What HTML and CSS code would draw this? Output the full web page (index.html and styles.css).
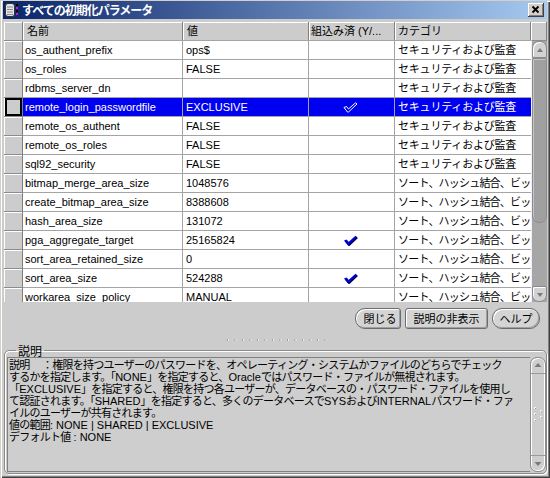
FILE: index.html
```html
<!DOCTYPE html>
<html lang="ja">
<head>
<meta charset="utf-8">
<title>すべての初期化パラメータ</title>
<link rel="stylesheet" href="styles.css">
</head>
<body>
<div class="window">
  <div class="titlebar">
    <svg class="app-icon" viewBox="0 0 16 16" width="16" height="16">
      <rect x="1.5" y="1.5" width="9" height="13" rx="2.5" fill="#e4e4e4" stroke="#303030"/>
      <path d="M3 5h6M3 7.5h6M3 10h6M3 12.5h6" stroke="#8a8a8a" stroke-width="1"/>
      <rect x="12" y="2" width="2" height="2" fill="#000"/>
      <rect x="12" y="5" width="2" height="2" fill="#c020c0"/>
      <rect x="12" y="8" width="2" height="2" fill="#000"/>
      <rect x="12" y="11" width="2" height="2" fill="#c020c0"/>
    </svg>
    <span class="title">すべての初期化パラメータ</span>
    <div class="close">
      <svg viewBox="0 0 16 14" width="16" height="14"><path d="M4.5 3.5l6 6M10.5 3.5l-6 6" stroke="#000" stroke-width="1.8"/></svg>
    </div>
  </div>

  <div class="content">
    <div class="table">
      <div class="grid">
        <div class="row head">
          <div class="cell rh"></div>
          <div class="cell hc">名前</div>
          <div class="cell hc">値</div>
          <div class="cell hc">組込み済 (Y/...</div>
          <div class="cell hc">カテゴリ</div>
        </div>
        <div class="row"><div class="cell rh"></div><div class="cell">os_authent_prefix</div><div class="cell">ops$</div><div class="cell chk"></div><div class="cell cat">セキュリティおよび監査</div></div>
        <div class="row"><div class="cell rh"></div><div class="cell">os_roles</div><div class="cell">FALSE</div><div class="cell chk"></div><div class="cell cat">セキュリティおよび監査</div></div>
        <div class="row"><div class="cell rh"></div><div class="cell">rdbms_server_dn</div><div class="cell"></div><div class="cell chk"></div><div class="cell cat">セキュリティおよび監査</div></div>
        <div class="row sel"><div class="cell rh"><div class="sel-mark"></div></div><div class="cell">remote_login_passwordfile</div><div class="cell">EXCLUSIVE</div><div class="cell chk"><svg viewBox="0 0 15 11" width="15" height="11"><polygon points="1,5.5 3.5,4.5 5.5,7 12.5,0.8 14,2 5.5,10 4.5,10" fill="none" stroke="#fff" stroke-width="1"/></svg></div><div class="cell cat">セキュリティおよび監査</div></div>
        <div class="row"><div class="cell rh"></div><div class="cell">remote_os_authent</div><div class="cell">FALSE</div><div class="cell chk"></div><div class="cell cat">セキュリティおよび監査</div></div>
        <div class="row"><div class="cell rh"></div><div class="cell">remote_os_roles</div><div class="cell">FALSE</div><div class="cell chk"></div><div class="cell cat">セキュリティおよび監査</div></div>
        <div class="row"><div class="cell rh"></div><div class="cell">sql92_security</div><div class="cell">FALSE</div><div class="cell chk"></div><div class="cell cat">セキュリティおよび監査</div></div>
        <div class="row"><div class="cell rh"></div><div class="cell">bitmap_merge_area_size</div><div class="cell">1048576</div><div class="cell chk"></div><div class="cell cat sort">ソート、ハッシュ結合、ビッ</div></div>
        <div class="row"><div class="cell rh"></div><div class="cell">create_bitmap_area_size</div><div class="cell">8388608</div><div class="cell chk"></div><div class="cell cat sort">ソート、ハッシュ結合、ビッ</div></div>
        <div class="row"><div class="cell rh"></div><div class="cell">hash_area_size</div><div class="cell">131072</div><div class="cell chk"></div><div class="cell cat sort">ソート、ハッシュ結合、ビッ</div></div>
        <div class="row"><div class="cell rh"></div><div class="cell">pga_aggregate_target</div><div class="cell">25165824</div><div class="cell chk"><svg viewBox="0 0 15 11" width="15" height="11"><polygon points="2,6.5 4.5,5.5 6.5,8 13.5,1.8 15,3 6.5,11 5.5,11" fill="#000050"/><polygon points="1,5.5 3.5,4.5 5.5,7 12.5,0.8 14,2 5.5,10 4.5,10" fill="#0000d8"/></svg></div><div class="cell cat sort">ソート、ハッシュ結合、ビッ</div></div>
        <div class="row"><div class="cell rh"></div><div class="cell">sort_area_retained_size</div><div class="cell">0</div><div class="cell chk"></div><div class="cell cat sort">ソート、ハッシュ結合、ビッ</div></div>
        <div class="row"><div class="cell rh"></div><div class="cell">sort_area_size</div><div class="cell">524288</div><div class="cell chk"><svg viewBox="0 0 15 11" width="15" height="11"><polygon points="2,6.5 4.5,5.5 6.5,8 13.5,1.8 15,3 6.5,11 5.5,11" fill="#000050"/><polygon points="1,5.5 3.5,4.5 5.5,7 12.5,0.8 14,2 5.5,10 4.5,10" fill="#0000d8"/></svg></div><div class="cell cat sort">ソート、ハッシュ結合、ビッ</div></div>
        <div class="row"><div class="cell rh"></div><div class="cell">workarea_size_policy</div><div class="cell">MANUAL</div><div class="cell chk"></div><div class="cell cat sort">ソート、ハッシュ結合、ビッ</div></div>
      </div>
      <div class="vscroll">
        <div class="vs-head"></div>
        <div class="vs-body">
          <div class="vs-up"><svg viewBox="0 0 14 16" width="14" height="16"><path d="M4 10h6l-3-4z" fill="#7a7a7a"/></svg></div>
          <div class="vs-thumb"></div>
          <div class="vs-track"></div>
          <div class="vs-down"><svg viewBox="0 0 14 15" width="14" height="15"><path d="M4 6h6l-3 4z" fill="#7a7a7a"/></svg></div>
        </div>
      </div>
    </div>

    <div class="buttons">
      <div class="btn b-close">閉じる</div>
      <div class="btn b-hide">説明の非表示</div>
      <div class="btn b-help">ヘルプ</div>
    </div>

    <div class="splitter"><div class="dots"></div></div>

    <fieldset class="desc">
      <legend>説明</legend>
      <div class="desc-box">
        <div class="desc-text">説明 　：権限を持つユーザーのパスワードを、オペレーティング・システムかファイルのどちらでチェック<br>するかを指定します。「<span class="en">NONE</span>」を指定すると、<span class="en">Oracle</span>ではパスワード・ファイルが無視されます。<br>「<span class="en">EXCLUSIVE</span>」を指定すると、権限を持つ各ユーザーが、データベースの・パスワード・ファイルを使用し<br>て認証されます。「<span class="en">SHARED</span>」を指定すると、多くのデータベースで<span class="en">SYS</span>および<span class="en">INTERNAL</span>パスワード・ファ<br>イルのユーザーが共有されます。<br>値の範囲<span class="en">: NONE | SHARED | EXCLUSIVE</span><br>デフォルト値<span class="en"> : NONE</span></div>
        <div class="dscroll">
          <div class="ds-up"><svg viewBox="0 0 14 14" width="14" height="14"><path d="M3.5 9h7l-3.5-4z" fill="#7a7a7a"/></svg></div>
          <div class="ds-grip"><svg viewBox="0 0 14 18" width="14" height="18"><g fill="#f4f4f4"><rect x="3" y="1" width="2" height="2"/><rect x="9" y="4" width="2" height="2"/><rect x="3" y="7" width="2" height="2"/><rect x="9" y="10" width="2" height="2"/><rect x="3" y="13" width="2" height="2"/></g><g fill="#9a9a9a"><rect x="4" y="2" width="1" height="1"/><rect x="10" y="5" width="1" height="1"/><rect x="4" y="8" width="1" height="1"/><rect x="10" y="11" width="1" height="1"/><rect x="4" y="14" width="1" height="1"/></g></svg></div>
          <div class="ds-down"><svg viewBox="0 0 14 14" width="14" height="14"><path d="M3.5 5h7l-3.5 4z" fill="#7a7a7a"/></svg></div>
        </div>
      </div>
    </fieldset>
  </div>
</div>
</body>
</html>
```
FILE: styles.css
```css
* { box-sizing: border-box; }
html, body { margin: 0; padding: 0; }
body {
  width: 550px;
  height: 478px;
  overflow: hidden;
  background: #d4d0c8;
  font-family: "Liberation Sans", "Noto Sans CJK JP", sans-serif;
  font-size: 11px;
  color: #000;
}
.window {
  width: 550px;
  height: 478px;
  display: flex;
  flex-direction: column;
  padding: 1px 3px 4px 3px;
  background: #cccccc;
  box-shadow: inset 1px 1px #d4d0c8, inset 2px 2px #ffffff, inset -1px -1px #404040, inset -2px -2px #808080;
}

/* title bar */
.titlebar {
  flex: none;
  height: 18px;
  display: flex;
  align-items: center;
  padding: 0 3px 0 1px;
  background: linear-gradient(to right, #0a246a, #a6caf0);
  color: #fff;
}
.app-icon { flex: none; display: block; }
.title {
  margin-left: 2px;
  font-family: "Noto Sans CJK JP", sans-serif;
  font-weight: bold;
  font-size: 12px;
  letter-spacing: -1px;
  line-height: 18px;
}
.close {
  margin-left: auto;
  width: 16px;
  height: 14px;
  background: #d4d0c8;
  box-shadow: inset -1px -1px #404040, inset 1px 1px #ffffff, inset -2px -2px #808080;
}
.close svg { display: block; }

/* content */
.content {
  flex: 1;
  display: flex;
  flex-direction: column;
  padding: 3px 0 0 1px;
  min-height: 0;
}

/* table */
.table {
  flex: none;
  height: 280px;
  display: flex;
  overflow: hidden;
}
.grid {
  width: 527px;
  flex: none;
  display: flex;
  flex-direction: column;
}
.row {
  flex: none;
  display: grid;
  grid-template-columns: 19px 160px 126px 86px 136px;
  height: 19px;
}
.cell {
  border-top: 1px solid #a4a4a4;
  border-right: 1px solid #a4a4a4;
  background: #ffffff;
  padding-left: 2px;
  line-height: 18px;
  white-space: nowrap;
  overflow: hidden;
}
.cell:nth-child(3), .cell.cat { padding-left: 3px; }
.cat { letter-spacing: -0.2px; border-right: none; }
.cat.sort { letter-spacing: -0.8px; }
.row.head { height: 18px; }
.row.head .cell {
  border-top: none;
  border-right: 1px solid #808080;
  background: #cccccc;
  box-shadow: inset 1px 1px #ffffff;
  line-height: 18px;
  padding-left: 4px;
}
.row.head .cell:nth-child(4) { padding-left: 2px; }
.row.head .cell:nth-child(5) { padding-left: 3px; border-right: 1px solid #808080; }
.cell.rh {
  background: #cccccc;
  border-top: 1px solid #8c8c8c;
  border-right: 1px solid #808080;
  box-shadow: inset 1px 1px #ffffff;
  padding: 0;
}
.sel-mark {
  height: 100%;
  margin-left: 1px;
  border: 2px solid #000;
  background: #cccccc;
}
.row.sel .cell:not(.rh) {
  background: #0000f0;
  color: #ffffff;
}
.chk {
  display: flex;
  align-items: center;
  justify-content: center;
  padding-left: 0;
}
.chk svg { display: block; margin-left: -2px; }

/* table scrollbar */
.vscroll {
  width: 16px;
  flex: none;
  display: flex;
  flex-direction: column;
}
.vs-head {
  flex: none;
  height: 18px;
  background: #cccccc;
  box-shadow: inset 1px 1px #ffffff;
  border-right: 1px solid #808080;
}
.vs-body {
  flex: 1;
  display: flex;
  flex-direction: column;
  background: #a6a6a6;
  border-top: 1px solid #8c8c8c;
  border-left: 1px solid #f0f0f0;
}
.vs-up {
  flex: none;
  height: 17px;
  background: #d2d2d2;
  border: 1px solid #8a8a8a;
  border-radius: 7px 7px 2px 2px;
  box-shadow: inset 1px 1px #ffffff;
}
.vs-up svg, .vs-down svg { display: block; }
.vs-thumb {
  flex: none;
  height: 165px;
  background: #a0a0a0;
  border: 1px solid #8c8c8c;
  border-radius: 2px 2px 7px 7px;
  box-shadow: inset 1px 1px #c4c4c4;
}
.vs-track { flex: 1; background: #a6a6a6; }
.vs-down {
  flex: none;
  height: 16px;
  background: #d2d2d2;
  border: 1px solid #8a8a8a;
  border-radius: 2px 2px 7px 7px;
  box-shadow: inset 1px 1px #ffffff;
}

/* buttons */
.buttons {
  flex: none;
  height: 34px;
  display: flex;
  justify-content: flex-end;
  align-items: flex-start;
  gap: 4px;
  padding: 6px 7px 0 0;
}
.btn {
  height: 21px;
  display: flex;
  align-items: center;
  justify-content: center;
  font-family: "Noto Sans CJK JP", sans-serif;
  font-size: 11px;
  line-height: 19px;
  background: #d4d4d4;
  border: 1px solid #6c6c6c;
  box-shadow: inset 1px 1px #ffffff, inset -1px -1px #a0a0a0;
}
.b-close { width: 46px; border-radius: 10px 3px 3px 10px; padding-left: 4px; }
.b-hide { width: 83px; border-radius: 3px; }
.b-help { width: 48px; border-radius: 10px; }

/* splitter */
.splitter {
  flex: none;
  height: 8px;
  display: flex;
  justify-content: center;
  padding-top: 3px;
}
.dots {
  width: 98px;
  height: 2px;
  background-image: linear-gradient(to right, #9a9a9a 0 1px, #f4f4f4 1px 2px, transparent 2px);
  background-size: 7.5px 2px;
  background-repeat: repeat-x;
}

/* description group */
.desc {
  flex: 1;
  min-height: 0;
  min-width: 0;
  margin: 0;
  padding: 0 0 1px 2px;
  border: 1px solid #8a8a8a;
  border-radius: 5px;
  box-shadow: 1px 1px #ffffff, inset 1px 1px #ffffff;
  display: flex;
  flex-direction: column;
}
.desc legend {
  margin-left: 9px;
  padding: 0 2px;
  font-family: "Noto Sans CJK JP", sans-serif;
  font-size: 12px;
  line-height: 13px;
  height: 13px;
}
.desc-box {
  flex: 1;
  min-height: 0;
  display: flex;
}
.desc-text {
  flex: 1;
  min-width: 0;
  overflow: hidden;
  white-space: nowrap;
  background: #cecece;
  border: 1px solid #808080;
  border-right: none;
  padding: 1px 0 0 1px;
  line-height: 12px;
  font-size: 11px;
  letter-spacing: -0.75px;
}
.desc-text .en { letter-spacing: 0; }
.dscroll {
  width: 16px;
  flex: none;
  display: flex;
  flex-direction: column;
  background: #cecece;
  border: 1px solid #8a8a8a;
  border-radius: 7px;
  box-shadow: inset 1px 1px #ffffff, inset -1px -1px #ffffff;
}
.ds-up {
  flex: none;
  height: 16px;
  border-bottom: 1px solid #9a9a9a;
  display: flex;
  justify-content: center;
}
.ds-grip {
  flex: 1;
  display: flex;
  align-items: center;
  justify-content: center;
}
.ds-down {
  flex: none;
  height: 16px;
  border-top: 1px solid #9a9a9a;
  display: flex;
  justify-content: center;
  align-items: flex-end;
}
.dscroll svg { display: block; }
```
